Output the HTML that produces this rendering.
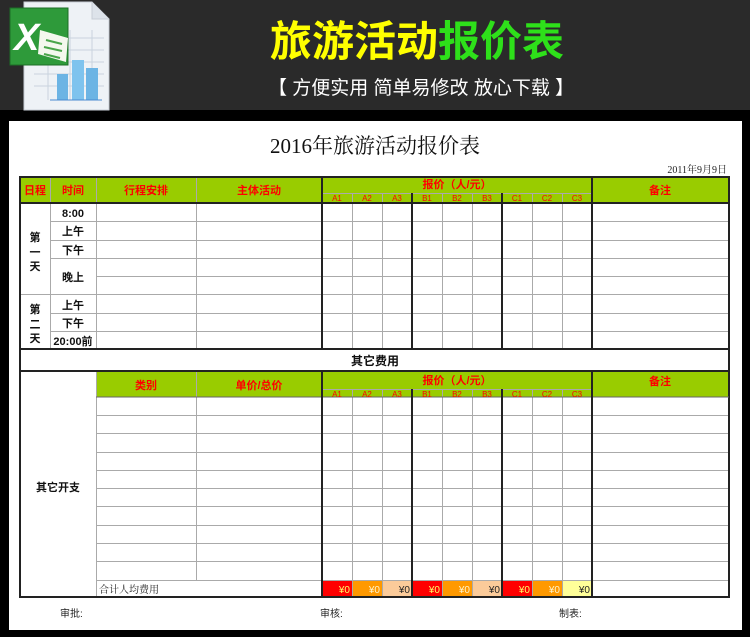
<!DOCTYPE html>
<html><head><meta charset="utf-8"><style>
body{margin:0;background:#000;width:750px;height:637px;overflow:hidden}
svg{display:block}
text{font-family:"Liberation Sans","Noto Sans CJK SC",sans-serif}
</style></head><body>
<svg width="750" height="637" viewBox="0 0 750 637" xmlns="http://www.w3.org/2000/svg">
<rect x="0" y="0" width="750" height="637" fill="#000"/>
<rect x="0" y="0" width="750" height="110" fill="#2a2a2a"/>
<!-- excel icon -->
<path d="M24 2 H92 L109 19 V110 H24 Z" fill="#eef2f6" stroke="#c8ced6"/>
<path d="M92 2 V19 H109" fill="#dde3ea" stroke="#c8ced6"/>
<g stroke="#c9d3de" stroke-width="1">
<line x1="34" y1="38" x2="104" y2="38"/><line x1="34" y1="50" x2="104" y2="50"/><line x1="34" y1="62" x2="104" y2="62"/><line x1="34" y1="74" x2="104" y2="74"/><line x1="34" y1="86" x2="104" y2="86"/>
<line x1="48" y1="30" x2="48" y2="100"/><line x1="70" y1="30" x2="70" y2="100"/><line x1="92" y1="30" x2="92" y2="100"/>
</g>
<rect x="57" y="74" width="11" height="26" fill="#6cb4e4"/>
<rect x="72" y="60" width="12" height="40" fill="#7ec3ee"/>
<rect x="86" y="68" width="12" height="32" fill="#6cb4e4"/>
<line x1="50" y1="100" x2="102" y2="100" stroke="#4a8ad0"/>
<rect x="10" y="8" width="58" height="57" fill="#2e9a3a" stroke="#1c6e26"/>
<path d="M40 30 L68 38 L66 62 L38 54 Z" fill="#f4f8ee"/>
<g stroke="#49a54a" stroke-width="2"><line x1="46" y1="40" x2="62" y2="44"/><line x1="44" y1="47" x2="62" y2="51"/><line x1="44" y1="54" x2="60" y2="58"/></g>
<text x="14" y="50" font-size="38" font-weight="bold" fill="#ffffff" font-style="italic">X</text>
<!-- title -->
<text x="270" y="56" font-size="42" font-weight="bold" fill="#ffff00">旅游活动<tspan fill="#2ee01a">报价表</tspan></text>
<text x="268" y="94" font-size="19" fill="#ffffff">【 方便实用 简单易修改  放心下载 】</text>
<!-- paper -->
<rect x="9" y="121" width="733" height="509" fill="#fff"/>
<text x="375" y="153" font-size="21" text-anchor="middle" fill="#111" style="font-family:'Liberation Serif','Noto Serif CJK SC',serif">2016年旅游活动报价表</text>
<text x="727" y="173" font-size="10" text-anchor="end" fill="#222" style="font-family:'Liberation Serif','Noto Serif CJK SC',serif">2011年9月9日</text>
<!-- green headers -->
<rect x="20" y="177" width="709" height="26" fill="#99cc00"/>
<rect x="96" y="371" width="633" height="26" fill="#99cc00"/>
<!-- total row colors -->
<rect x="322" y="580" width="30" height="17" fill="#ff0000"/><rect x="352" y="580" width="30" height="17" fill="#ff9900"/><rect x="382" y="580" width="30" height="17" fill="#fbcb9a"/>
<rect x="412" y="580" width="30" height="17" fill="#ff0000"/><rect x="442" y="580" width="30" height="17" fill="#ff9900"/><rect x="472" y="580" width="30" height="17" fill="#fbcb9a"/>
<rect x="502" y="580" width="30" height="17" fill="#ff0000"/><rect x="532" y="580" width="30" height="17" fill="#ff9900"/><rect x="562" y="580" width="30" height="17" fill="#ffff99"/>
<!-- thin grid -->
<g stroke="#aaaaaa" stroke-width="1">
<line x1="322" y1="193.5" x2="592" y2="193.5"/><line x1="322" y1="389.5" x2="592" y2="389.5"/>
<line x1="50" y1="221.5" x2="729" y2="221.5"/><line x1="50" y1="240.5" x2="729" y2="240.5"/><line x1="50" y1="258.5" x2="729" y2="258.5"/>
<line x1="96" y1="276.5" x2="729" y2="276.5"/><line x1="20" y1="294.5" x2="729" y2="294.5"/>
<line x1="50" y1="313.5" x2="729" y2="313.5"/><line x1="50" y1="331.5" x2="729" y2="331.5"/>
<line x1="96" y1="415.5" x2="729" y2="415.5"/><line x1="96" y1="433.5" x2="729" y2="433.5"/><line x1="96" y1="452.5" x2="729" y2="452.5"/><line x1="96" y1="470.5" x2="729" y2="470.5"/><line x1="96" y1="488.5" x2="729" y2="488.5"/><line x1="96" y1="506.5" x2="729" y2="506.5"/><line x1="96" y1="525.5" x2="729" y2="525.5"/><line x1="96" y1="543.5" x2="729" y2="543.5"/><line x1="96" y1="561.5" x2="729" y2="561.5"/><line x1="96" y1="580.5" x2="729" y2="580.5"/>
<line x1="50.5" y1="177" x2="50.5" y2="349"/><line x1="96.5" y1="177" x2="96.5" y2="349"/><line x1="196.5" y1="177" x2="196.5" y2="349"/>
<line x1="96.5" y1="371" x2="96.5" y2="597"/><line x1="196.5" y1="371" x2="196.5" y2="580"/>
<line x1="352.5" y1="193" x2="352.5" y2="349"/><line x1="382.5" y1="193" x2="382.5" y2="349"/><line x1="442.5" y1="193" x2="442.5" y2="349"/><line x1="472.5" y1="193" x2="472.5" y2="349"/><line x1="532.5" y1="193" x2="532.5" y2="349"/><line x1="562.5" y1="193" x2="562.5" y2="349"/>
<line x1="352.5" y1="389" x2="352.5" y2="597"/><line x1="382.5" y1="389" x2="382.5" y2="597"/><line x1="442.5" y1="389" x2="442.5" y2="597"/><line x1="472.5" y1="389" x2="472.5" y2="597"/><line x1="532.5" y1="389" x2="532.5" y2="597"/><line x1="562.5" y1="389" x2="562.5" y2="597"/>
</g>
<!-- thick -->
<g stroke="#222" stroke-width="2" fill="none">
<rect x="20" y="177" width="709" height="420"/>
<line x1="20" y1="203" x2="729" y2="203"/>
<line x1="20" y1="349" x2="729" y2="349"/><line x1="20" y1="371" x2="729" y2="371"/>
<line x1="96" y1="397" x2="729" y2="397" stroke="#666" stroke-width="1"/>
<line x1="322" y1="177" x2="322" y2="349"/><line x1="412" y1="193" x2="412" y2="349"/><line x1="502" y1="193" x2="502" y2="349"/><line x1="592" y1="177" x2="592" y2="349"/>
<line x1="322" y1="371" x2="322" y2="597"/><line x1="412" y1="389" x2="412" y2="597"/><line x1="502" y1="389" x2="502" y2="597"/><line x1="592" y1="371" x2="592" y2="597"/>
</g>
<!-- header text -->
<g font-size="11" font-weight="bold" fill="#ff0000" text-anchor="middle">
<text x="35" y="194">日程</text><text x="73" y="194">时间</text><text x="146" y="194">行程安排</text><text x="259" y="194">主体活动</text>
<text x="457" y="188">报价（人/元）</text><text x="660" y="194">备注</text>
<text x="146" y="389">类别</text><text x="259" y="389">单价/总价</text>
<text x="457" y="384">报价（人/元）</text><text x="660" y="385">备注</text>
</g>
<g font-size="8" fill="#ff0000" text-anchor="middle" style="font-family:'Liberation Serif',serif">
<text x="337" y="201">A1</text><text x="367" y="201">A2</text><text x="397" y="201">A3</text><text x="427" y="201">B1</text><text x="457" y="201">B2</text><text x="487" y="201">B3</text><text x="517" y="201">C1</text><text x="547" y="201">C2</text><text x="577" y="201">C3</text>
<text x="337" y="397">A1</text><text x="367" y="397">A2</text><text x="397" y="397">A3</text><text x="427" y="397">B1</text><text x="457" y="397">B2</text><text x="487" y="397">B3</text><text x="517" y="397">C1</text><text x="547" y="397">C2</text><text x="577" y="397">C3</text>
</g>
<g font-size="11" font-weight="bold" fill="#111" text-anchor="middle">
<text x="73" y="217">8:00</text><text x="73" y="235">上午</text><text x="73" y="254">下午</text><text x="73" y="281">晚上</text>
<text x="73" y="309">上午</text><text x="73" y="327">下午</text><text x="73" y="345">20:00前</text>
<text x="35" y="241">第</text><text x="35" y="256">一</text><text x="35" y="270">天</text>
<text x="35" y="313">第</text><text x="35" y="328">二</text><text x="35" y="342">天</text>
<text x="375" y="365" font-size="12">其它费用</text>
<text x="58" y="491">其它开支</text>
</g>
<text x="99" y="593" font-size="10" fill="#222" style="font-family:'Liberation Serif','Noto Serif CJK SC',serif">合计人均费用</text>
<g font-size="10" text-anchor="end">
<text x="350" y="593" fill="#ffff66">¥0</text><text x="380" y="593" fill="#fff5cc">¥0</text><text x="410" y="593" fill="#222">¥0</text>
<text x="440" y="593" fill="#ffff66">¥0</text><text x="470" y="593" fill="#fff5cc">¥0</text><text x="500" y="593" fill="#222">¥0</text>
<text x="530" y="593" fill="#ffff66">¥0</text><text x="560" y="593" fill="#fff5cc">¥0</text><text x="590" y="593" fill="#222">¥0</text>
</g>
<g font-size="10" fill="#222" style="font-family:'Liberation Serif','Noto Serif CJK SC',serif">
<text x="60" y="617">审批:</text><text x="320" y="617">审核:</text><text x="559" y="617">制表:</text>
</g>
</svg>
</body></html>
